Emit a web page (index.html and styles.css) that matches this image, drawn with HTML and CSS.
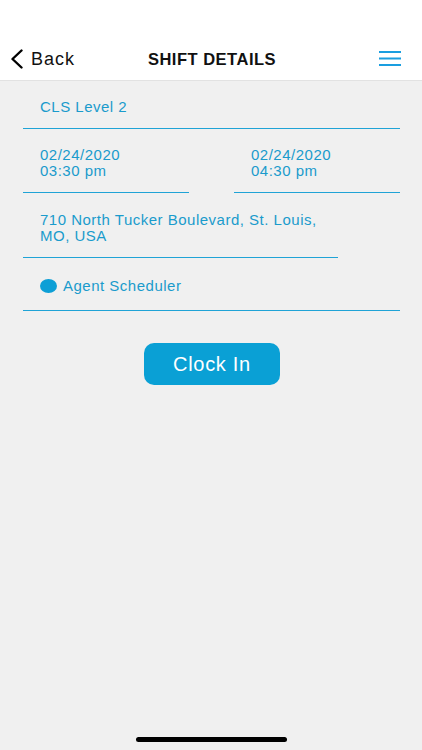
FILE: index.html
```html
<!DOCTYPE html>
<html lang="en">
<head>
    <meta charset="UTF-8">
    <meta name="viewport" content="width=device-width, initial-scale=1.0">
    <title>Shift Details</title>
    <link rel="stylesheet" href="styles.css">
</head>
<body>
    <div class="screen">
        <header class="topbar">
            <div class="back">
                <svg class="back-icon" width="14" height="20" viewBox="0 0 14 20" fill="none">
                    <path d="M11.5 1.5 L2.5 10 L11.5 18.5" stroke="#000" stroke-width="2.4" stroke-linecap="round" stroke-linejoin="round"/>
                </svg>
                <span>Back</span>
            </div>
            <h1>SHIFT DETAILS</h1>
            <svg class="menu-icon" width="22" height="16" viewBox="0 0 22 16">
                <rect x="0" y="0" width="22" height="2" fill="#1a9ee0"/>
                <rect x="0" y="6.5" width="22" height="2" fill="#1a9ee0"/>
                <rect x="0" y="13" width="22" height="2" fill="#1a9ee0"/>
            </svg>
        </header>

        <div class="content">
            <div class="field">CLS Level 2</div>

            <div class="field-row">
                <div class="field">02/24/2020<br>03:30 pm</div>
                <div class="field">02/24/2020<br>04:30 pm</div>
            </div>

            <div class="field field-short">710 North Tucker Boulevard, St. Louis,<br>MO, USA</div>

            <div class="field field-agent">
                <span class="dot"></span>
                <span>Agent Scheduler</span>
            </div>

            <div class="actions">
                <button class="clock-in">Clock In</button>
            </div>
        </div>

        <div class="home-bar"></div>
    </div>
</body>
</html>
```

FILE: styles.css
```css
body {
    margin: 0;
    font-family: "Liberation Sans", Arial, sans-serif;
    background-color: #f0f0f0;
}

.screen {
    width: 422px;
    height: 750px;
    display: flex;
    flex-direction: column;
    background-color: #f0f0f0;
}

.topbar {
    height: 42px;
    padding-top: 38px;
    background-color: #fff;
    border-bottom: 1px solid #e2e2e2;
    display: grid;
    grid-template-columns: 1fr auto 1fr;
    align-items: center;
    padding-left: 10px;
    padding-right: 21px;
}

.back {
    display: flex;
    align-items: center;
    gap: 7px;
    font-size: 18px;
    letter-spacing: 1px;
    color: #111;
}

.back-icon {
    display: block;
}

.topbar h1 {
    margin: 0 0 0 13px;
    font-size: 16.5px;
    font-weight: bold;
    color: #111;
    letter-spacing: 0.5px;
}

.menu-icon {
    display: block;
    justify-self: end;
}

.content {
    flex: 1;
    padding: 0 22px 0 23px;
}

.field {
    padding: 18px 17px 13px;
    border-bottom: 1px solid #1fa3d6;
    color: #1a9bcc;
    font-size: 15px;
    line-height: 16px;
    letter-spacing: 0.5px;
}

.field-row {
    display: flex;
    justify-content: space-between;
}

.field-row .field {
    width: 132px;
}

.field-short {
    margin-right: 62px;
    padding-top: 19px;
}

.field-agent {
    display: flex;
    align-items: center;
    gap: 6px;
    padding-top: 19px;
    padding-bottom: 15px;
    line-height: 18px;
}

.dot {
    width: 17px;
    height: 14px;
    border-radius: 50%;
    background-color: #0d9fd6;
}

.actions {
    display: flex;
    justify-content: center;
    padding-top: 32px;
}

.clock-in {
    width: 136px;
    height: 42px;
    border: none;
    border-radius: 10px;
    background-color: #0aa0d5;
    color: #fff;
    font-family: "Liberation Sans", Arial, sans-serif;
    font-size: 20px;
    letter-spacing: 0.7px;
    margin-left: 1px;
}

.home-bar {
    width: 151px;
    height: 5px;
    border-radius: 3px;
    background-color: #000;
    margin: 0 auto 8px;
}
```
